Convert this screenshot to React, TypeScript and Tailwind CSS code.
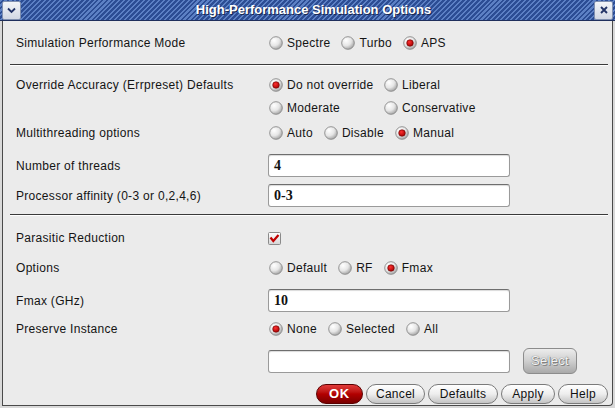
import type { ReactNode } from 'react';

function RadioIcon({ on }: { on?: boolean }) {
  return (
    <svg width="14" height="14" viewBox="0 0 14 14" className="ml-px shrink-0">
      <defs>
        <radialGradient id="rb" cx="35%" cy="30%" r="75%">
          <stop offset="0%" stopColor="#ffffff" />
          <stop offset="55%" stopColor="#e6e6e6" />
          <stop offset="100%" stopColor="#a0a0a0" />
        </radialGradient>
        <radialGradient id="rd" cx="40%" cy="35%" r="70%">
          <stop offset="0%" stopColor="#ff3030" />
          <stop offset="100%" stopColor="#a00000" />
        </radialGradient>
      </defs>
      <circle cx="7" cy="7" r="6.3" fill="url(#rb)" stroke="#8a8a8a" strokeWidth="0.9" />
      {on && <circle cx="7" cy="7" r="3.3" fill="url(#rd)" stroke="#6a0000" strokeWidth="0.6" />}
    </svg>
  );
}

function Radio({ label, on }: { label: string; on?: boolean }) {
  return (
    <span className="flex items-center gap-[4px] whitespace-nowrap">
      <RadioIcon on={on} />
      <span>{label}</span>
    </span>
  );
}

function Row({ label, h = 'h-[22px]', mt, children }: { label?: string; h?: string; mt: string; children?: ReactNode }) {
  return (
    <div className={`flex items-center ${h} ${mt}`}>
      <div className="w-[252px] shrink-0 whitespace-nowrap">{label}</div>
      {children}
    </div>
  );
}

function Field({ value }: { value?: string }) {
  return (
    <div className="w-[242px] h-[23px] bg-white border border-[#9a9a9a] border-t-[#6e6e6e] rounded-[3px] shadow-[inset_0_1px_1px_rgba(0,0,0,0.15)] flex items-center pl-[5px] font-['Liberation_Serif'] font-bold text-[14px] tracking-normal text-[#111]">
      {value}
    </div>
  );
}

function Separator({ mt }: { mt: string }) {
  return <div className={`${mt} ml-[7px] h-px bg-[#3a3a3a] shadow-[0_1px_0_#ffffff]`} />;
}

function PillButton({ children, w, primary }: { children: ReactNode; w: string; primary?: boolean }) {
  return (
    <button
      className={`${w} h-[20px] rounded-full border flex items-center justify-center text-[12px] ${
        primary
          ? 'bg-gradient-to-b from-[#e23a3a] via-[#b30000] to-[#7a0000] border-[#5a0000] text-white font-bold text-[13px] tracking-[0.8px]'
          : 'bg-gradient-to-b from-[#ffffff] via-[#eeeeee] to-[#c4c4c4] border-[#7a7a7a] text-[#111] tracking-[0.3px]'
      }`}
    >
      {children}
    </button>
  );
}

export default function App() {
  return (
    <div className="w-[615px] h-[408px] flex flex-col bg-[#d9d9d9] font-['Liberation_Sans',Arial,sans-serif] text-[12px] tracking-[0.3px] text-[#141414] overflow-hidden">
      {/* title bar */}
      <div className="h-[21px] shrink-0 flex items-center border-b border-[#1f2f5c] bg-[repeating-linear-gradient(135deg,#5c80c4_0px,#5c80c4_1.5px,#2c4d94_1.5px,#2c4d94_3.5px)]">
        <div className="ml-[2px] w-[19px] h-[19px] rounded-[2px] border border-[#8090b0] bg-gradient-to-b from-[#f2f4f8] to-[#d2d8e4] flex items-center justify-center">
          <svg width="9" height="7" viewBox="0 0 9 7">
            <path d="M1 1.5 L4.5 5 L8 1.5" fill="none" stroke="#223366" strokeWidth="1.8" />
          </svg>
        </div>
        <div className="flex-1 text-center pl-[12px] text-white font-bold text-[13px] tracking-normal [text-shadow:1px_1px_0_#1a2850]">
          High-Performance Simulation Options
        </div>
        <div className="mr-[2px] w-[19px] h-[19px] rounded-[2px] border border-[#8090b0] bg-gradient-to-b from-[#f2f4f8] to-[#d2d8e4] flex items-center justify-center">
          <svg width="8" height="8" viewBox="0 0 8 8">
            <path d="M1 1 L7 7 M7 1 L1 7" stroke="#223366" strokeWidth="1.9" />
          </svg>
        </div>
      </div>

      {/* body */}
      <div className="flex-1 px-[2px] pb-[2px]">
        <div className="h-full bg-[#ebebeb] border-l border-r border-b border-[#4a4a4a] rounded-br-[4px] pl-[13px] pr-[4px] flex flex-col">
          <Row label="Simulation Performance Mode" mt="mt-[11px]">
            <div className="flex gap-[10px]">
              <Radio label="Spectre" />
              <Radio label="Turbo" />
              <Radio label="APS" on />
            </div>
          </Row>

          <div className="-ml-[13px]">
            <Separator mt="mt-[10px]" />
          </div>

          <div className="flex mt-[9px]">
            <div className="w-[252px] shrink-0 h-[22px] flex items-center whitespace-nowrap">Override Accuracy (Errpreset) Defaults</div>
            <div className="grid grid-cols-[115px_auto] gap-y-px">
              <div className="h-[22px] flex items-center"><Radio label="Do not override" on /></div>
              <div className="h-[22px] flex items-center"><Radio label="Liberal" /></div>
              <div className="h-[22px] flex items-center"><Radio label="Moderate" /></div>
              <div className="h-[22px] flex items-center"><Radio label="Conservative" /></div>
            </div>
          </div>

          <Row label="Multithreading options" mt="mt-[3px]">
            <div className="flex gap-[10px]">
              <Radio label="Auto" />
              <Radio label="Disable" />
              <Radio label="Manual" on />
            </div>
          </Row>

          <Row label="Number of threads" h="h-[23px]" mt="mt-[10px]">
            <Field value="4" />
          </Row>

          <Row label="Processor affinity (0-3 or 0,2,4,6)" h="h-[23px]" mt="mt-[7px]">
            <Field value="0-3" />
          </Row>

          <div className="-ml-[13px]">
            <Separator mt="mt-[7px]" />
          </div>

          <Row label="Parasitic Reduction" mt="mt-[12px]">
            <svg width="13" height="13" viewBox="0 0 13 13">
              <defs>
                <linearGradient id="cb" x1="0" y1="0" x2="0" y2="1">
                  <stop offset="0%" stopColor="#ffffff" />
                  <stop offset="100%" stopColor="#d4d4d4" />
                </linearGradient>
              </defs>
              <rect x="0.5" y="0.5" width="12" height="12" rx="1" fill="url(#cb)" stroke="#8a8a8a" />
              <path d="M2.5 5.5 L5.3 9 L10.5 3" fill="none" stroke="#c00000" strokeWidth="2.2" />
            </svg>
          </Row>

          <Row label="Options" mt="mt-[8px]">
            <div className="flex gap-[10px]">
              <Radio label="Default" />
              <Radio label="RF" />
              <Radio label="Fmax" on />
            </div>
          </Row>

          <Row label="Fmax (GHz)" h="h-[23px]" mt="mt-[10px]">
            <Field value="10" />
          </Row>

          <Row label="Preserve Instance" mt="mt-[6px]">
            <div className="flex gap-[10px]">
              <Radio label="None" on />
              <Radio label="Selected" />
              <Radio label="All" />
            </div>
          </Row>

          <Row h="h-[26px]" mt="mt-[8px]">
            <Field />
            <button className="ml-[13px] w-[54px] h-[26px] rounded-[6px] border border-[#8c8c8c] bg-gradient-to-b from-[#ececec] via-[#cfcfcf] to-[#a9a9a9] text-[13px] text-[#f4f4f4] [text-shadow:0_0_1px_#555,1px_1px_0_#888]">
              Select
            </button>
          </Row>

          <div className="mt-[10px] flex justify-end gap-[3px]">
            <PillButton w="w-[47px]" primary>OK</PillButton>
            <PillButton w="w-[59px]">Cancel</PillButton>
            <PillButton w="w-[70px]">Defaults</PillButton>
            <PillButton w="w-[54px]">Apply</PillButton>
            <PillButton w="w-[50px]">Help</PillButton>
          </div>
        </div>
      </div>
    </div>
  );
}
